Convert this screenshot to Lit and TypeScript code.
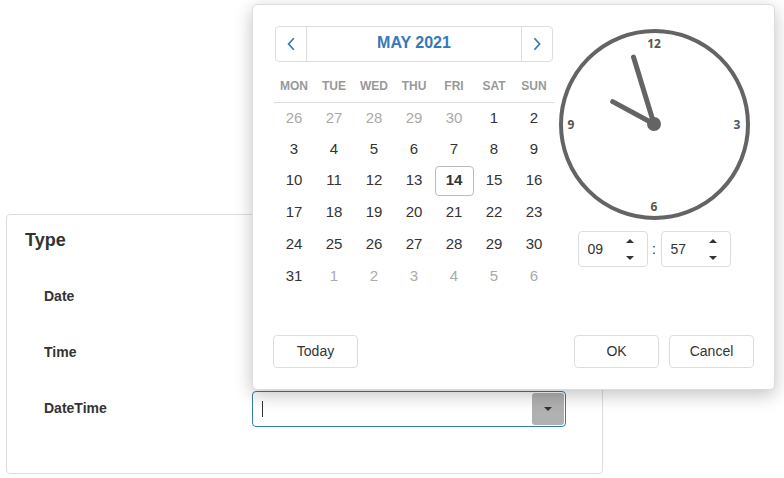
import { LitElement, html, css, svg } from "lit";
import { customElement, property, state } from "lit/decorators.js";
import { classMap } from "lit/directives/class-map.js";

const WEEKDAYS = ["Mon", "Tue", "Wed", "Thu", "Fri", "Sat", "Sun"];

interface Day {
  label: number;
  outside: boolean;
}

/** Six Monday-first weeks covering the given month. */
function monthWeeks(year: number, month: number): Day[][] {
  const lead = (new Date(year, month, 1).getDay() + 6) % 7;
  return Array.from({ length: 6 }, (_, w) =>
    Array.from({ length: 7 }, (_, d) => {
      const date = new Date(year, month, 1 - lead + w * 7 + d);
      return { label: date.getDate(), outside: date.getMonth() !== month };
    })
  );
}

@customElement("month-calendar")
export class MonthCalendar extends LitElement {
  static styles = css`
    :host {
      display: block;
      width: 280px;
    }
    button {
      font: inherit;
      color: inherit;
      background: none;
      border: 0;
      padding: 0;
      cursor: pointer;
    }
    .nav {
      box-sizing: border-box;
      display: flex;
      height: 36px;
      margin: 0 1px 8px;
      border: 1px solid #ddd;
      border-radius: 4px;
      color: #337ab7;
    }
    .step {
      width: 31px;
      display: flex;
      align-items: center;
      justify-content: center;
    }
    .prev {
      border-right: 1px solid #ddd;
    }
    .next {
      border-left: 1px solid #ddd;
    }
    .step svg {
      fill: none;
      stroke: currentColor;
      stroke-width: 1.7;
    }
    .nav .month {
      flex: 1;
      padding-bottom: 2px;
      font-size: 16px;
      font-weight: bold;
      text-transform: uppercase;
    }
    table {
      width: 100%;
      table-layout: fixed;
      border-collapse: separate;
      border-spacing: 0;
    }
    th,
    td {
      padding: 0;
      text-align: center;
      vertical-align: middle;
    }
    th {
      height: 32px;
      border-bottom: 1px solid #ddd;
      color: #999;
      font-size: 12px;
      line-height: 16px;
      text-transform: uppercase;
    }
    td {
      height: 32px;
      font-size: 15px;
    }
    .short td {
      height: 31px;
    }
    .day {
      box-sizing: border-box;
      display: block;
      width: 39px;
      height: 30px;
      margin: 0 auto;
      padding-bottom: 2px;
      border: 1px solid transparent;
      border-radius: 4px;
    }
    .outside {
      color: #aaa;
    }
    .selected {
      border-color: #bbb;
      font-weight: bold;
    }
  `;

  @property({ type: Number }) year = 2021;
  @property({ type: Number }) month = 4;
  @property({ type: Number }) day = 14;

  render() {
    const title = new Date(this.year, this.month, 1).toLocaleDateString("en-US", {
      month: "long",
      year: "numeric",
    });
    return html`
      <div class="nav">
        <button class="step prev" aria-label="Previous month">
          <svg width="8" height="14" viewBox="0 0 8 14"><path d="M6.8 1.2 1.6 7l5.2 5.8" /></svg>
        </button>
        <button class="month">${title}</button>
        <button class="step next" aria-label="Next month">
          <svg width="8" height="14" viewBox="0 0 8 14"><path d="M1.4 1.2 6.6 7l-5.2 5.8" /></svg>
        </button>
      </div>
      <table>
        <thead>
          <tr>
            ${WEEKDAYS.map((name) => html`<th scope="col">${name}</th>`)}
          </tr>
        </thead>
        <tbody>
          ${monthWeeks(this.year, this.month).map(
            (week, i) => html`<tr class=${classMap({ short: i < 2 })}>
              ${week.map((d) => {
                const selected = !d.outside && d.label === this.day;
                return html`<td>
                  <button class=${classMap({ day: true, outside: d.outside, selected })}>${d.label}</button>
                </td>`;
              })}
            </tr>`
          )}
        </tbody>
      </table>
    `;
  }
}

@customElement("clock-face")
export class ClockFace extends LitElement {
  static styles = css`
    :host {
      display: block;
    }
    svg {
      display: block;
    }
    .ring {
      fill: none;
      stroke: #646464;
      stroke-width: 4;
    }
    .hand {
      stroke: #646464;
      stroke-width: 5;
      stroke-linecap: round;
    }
    .hub {
      fill: #646464;
    }
    text {
      fill: #555;
      font: bold 12px "Open Sans", "Noto Sans", sans-serif;
      text-anchor: middle;
    }
  `;

  @property({ type: Number }) hours = 0;
  @property({ type: Number }) minutes = 0;

  private hand(angle: number, length: number) {
    const a = (angle * Math.PI) / 180;
    return svg`<line class="hand" x1="96" y1="96"
      x2=${(96 + Math.sin(a) * length).toFixed(1)} y2=${(96 - Math.cos(a) * length).toFixed(1)} />`;
  }

  render() {
    return html`<svg width="192" height="192" viewBox="0 0 192 192" role="img" aria-label="Clock">
      <circle class="ring" cx="96.5" cy="96.5" r="93.5" />
      <text x="96" y="20">12</text>
      <text x="179" y="101">3</text>
      <text x="96" y="183">6</text>
      <text x="13" y="101">9</text>
      ${this.hand((this.hours % 12) * 30 + this.minutes / 2, 47)}
      ${this.hand(this.minutes * 6 + 1, 70)}
      <circle class="hub" cx="96" cy="96" r="7" />
    </svg>`;
  }
}

@customElement("number-spinner")
export class NumberSpinner extends LitElement {
  static styles = css`
    :host {
      box-sizing: border-box;
      display: flex;
      width: 70px;
      height: 36px;
      border: 1px solid #ddd;
      border-radius: 4px;
    }
    input {
      flex: 1;
      min-width: 0;
      padding: 0 0 0 9px;
      border: 0;
      outline: 0;
      background: none;
      color: #333;
      font: inherit;
    }
    .arrows {
      display: flex;
      flex-direction: column;
      width: 34px;
    }
    button {
      flex: 1;
      display: flex;
      align-items: center;
      justify-content: center;
      padding: 0;
      border: 0;
      background: none;
      color: #333;
    }
    svg {
      fill: currentColor;
    }
  `;

  @property({ type: Number }) value = 0;
  @property() name = "";

  render() {
    return html`
      <input type="text" inputmode="numeric" aria-label=${this.name} .value=${String(this.value).padStart(2, "0")} />
      <span class="arrows">
        <button aria-label="Increase" @click=${() => this.value++}>
          <svg width="8" height="4" viewBox="0 0 8 4"><path d="M0 4 4 0l4 4z" /></svg>
        </button>
        <button aria-label="Decrease" @click=${() => this.value--}>
          <svg width="8" height="4" viewBox="0 0 8 4"><path d="M0 0h8L4 4z" /></svg>
        </button>
      </span>
    `;
  }
}

@customElement("app-root")
export class AppRoot extends LitElement {
  static styles = css`
    :host {
      display: block;
      padding: 214px 181px 4px 6px;
      background: #fff;
      color: #333;
      font-family: "Liberation Sans", Arial, sans-serif;
      font-size: 14px;
      line-height: 20px;
    }
    .card {
      padding: 15px 36px 46px 37px;
      border: 1px solid #ddd;
      border-radius: 4px;
    }
    h2 {
      margin: 0 0 29px -19px;
      font-size: 18px;
      line-height: 20px;
    }
    .rows {
      display: grid;
      gap: 20px;
    }
    .row {
      display: grid;
      grid-template-columns: 208px 1fr;
      align-items: center;
    }
    label {
      padding-bottom: 2px;
      font-weight: bold;
    }
    .field {
      position: relative;
      box-sizing: border-box;
      display: flex;
      align-items: center;
      height: 36px;
      padding: 1px;
      border: 1px solid #ddd;
      border-radius: 4px;
    }
    .active {
      border-color: #337ab7;
    }
    .field input {
      flex: 1;
      min-width: 0;
      padding: 0 8px;
      border: 0;
      outline: 0;
      background: none;
      color: inherit;
      font: inherit;
    }
    .caret {
      width: 1px;
      height: 16px;
      margin-left: 8px;
      background: #333;
    }
    .toggle {
      display: flex;
      align-items: center;
      justify-content: center;
      width: 32px;
      height: 32px;
      padding: 0;
      border: 0;
      border-radius: 3px;
      background: #b1b1b1;
      color: #333;
    }
    .toggle svg {
      fill: currentColor;
    }
    .popup {
      position: absolute;
      bottom: calc(100% + 2px);
      left: -1px;
      z-index: 1;
      padding: 21px 20px;
      border: 1px solid #ddd;
      border-radius: 5px;
      background: #fff;
      box-shadow: 0 5px 18px rgba(0, 0, 0, 0.24);
    }
    .panes {
      display: flex;
      padding-left: 1px;
    }
    .time {
      display: flex;
      flex-direction: column;
      align-items: center;
      gap: 11px;
      width: 200px;
      padding-top: 2px;
    }
    .spinners {
      display: flex;
      align-items: center;
    }
    .colon {
      width: 13px;
      text-align: center;
    }
    .actions {
      display: flex;
      gap: 10px;
      margin-top: 42px;
    }
    .action {
      width: 85px;
      height: 33px;
      padding: 0 0 1px;
      border: 1px solid #ddd;
      border-radius: 4px;
      background: #fff;
      color: #333;
      font: inherit;
    }
    .today {
      margin-right: auto;
    }
  `;

  @state() private hours = 9;
  @state() private minutes = 57;

  private popup() {
    return html`<div class="popup" role="dialog" aria-label="Pick a date and time">
      <div class="panes">
        <month-calendar year="2021" month="4" day="14"></month-calendar>
        <div class="time">
          <clock-face .hours=${this.hours} .minutes=${this.minutes}></clock-face>
          <div class="spinners">
            <number-spinner name="Hours" .value=${this.hours}></number-spinner>
            <span class="colon">:</span>
            <number-spinner name="Minutes" .value=${this.minutes}></number-spinner>
          </div>
        </div>
      </div>
      <div class="actions">
        <button class="action today">Today</button>
        <button class="action">OK</button>
        <button class="action">Cancel</button>
      </div>
    </div>`;
  }

  render() {
    return html`<section class="card">
      <h2>Type</h2>
      <div class="rows">
        <div class="row">
          <label for="date">Date</label>
          <div class="field"><input id="date" type="text" /></div>
        </div>
        <div class="row">
          <label for="time">Time</label>
          <div class="field"><input id="time" type="text" /></div>
        </div>
        <div class="row">
          <label for="datetime">DateTime</label>
          <div class="field active">
            <span class="caret"></span>
            <input id="datetime" type="text" />
            <button class="toggle" aria-label="Open picker">
              <svg width="8" height="4" viewBox="0 0 8 4"><path d="M0 0h8L4 4z" /></svg>
            </button>
            ${this.popup()}
          </div>
        </div>
      </div>
    </section>`;
  }
}
